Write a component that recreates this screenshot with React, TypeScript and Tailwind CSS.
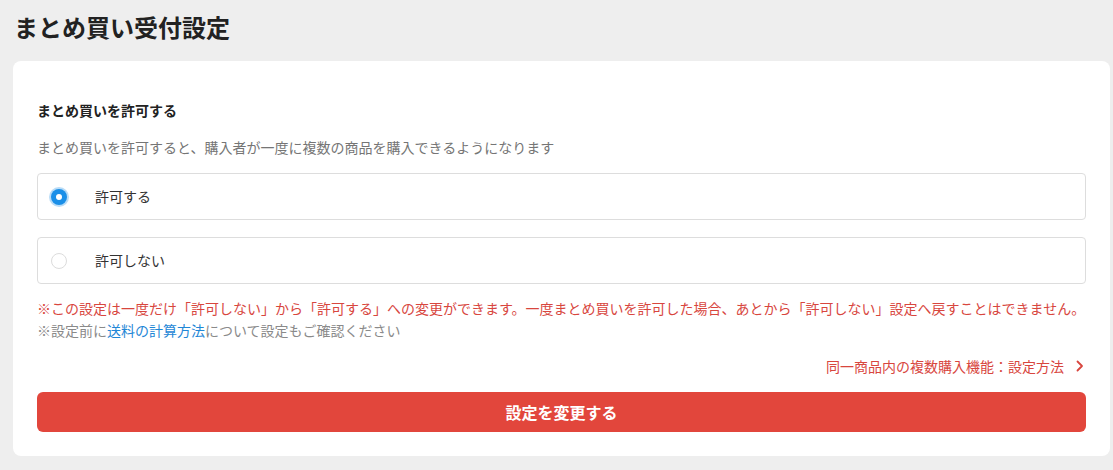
import React from "react";

export default function App() {
  return (
    <div
      className="w-[1113px] h-[470px] bg-[#eeeeee] overflow-hidden"
      style={{ fontFamily: '"Noto Sans CJK JP", "Noto Sans", sans-serif' }}
    >
      <div className="h-[61px] pl-[14px] pt-[9px]">
        <h1 className="text-[24px] leading-[36px] font-bold text-[#222222]">
          まとめ買い受付設定
        </h1>
      </div>
      <div className="ml-[13px] w-[1097px] bg-white rounded-[8px] px-[24px] pt-[39px] pb-[24px]">
        <div className="text-[14px] leading-[20px] font-bold text-[#222222]">
          まとめ買いを許可する
        </div>
        <p className="mt-[17px] text-[14px] leading-[20px] text-[#757575]">
          まとめ買いを許可すると、購入者が一度に複数の商品を購入できるようになります
        </p>
        <div className="mt-[16px] flex flex-col gap-[17px]">
          <label className="h-[47px] flex items-center border border-[#dddddd] rounded-[4px] pl-[11px]">
            <span className="w-[20px] h-[20px] rounded-full bg-[#b9dcf7] flex items-center justify-center">
              <span className="w-[16px] h-[16px] rounded-full bg-[#1a8fe8] flex items-center justify-center">
                <span className="w-[6px] h-[6px] rounded-full bg-white" />
              </span>
            </span>
            <span className="ml-[26px] text-[14px] text-[#333333]">許可する</span>
          </label>
          <label className="h-[47px] flex items-center border border-[#dddddd] rounded-[4px] pl-[11px]">
            <span className="w-[20px] h-[20px] flex items-center justify-center">
              <span className="w-[16px] h-[16px] rounded-full border border-[#dcdcdc] bg-white" />
            </span>
            <span className="ml-[26px] text-[14px] text-[#333333]">許可しない</span>
          </label>
        </div>
        <div className="mt-[13px] text-[14px] leading-[22px]">
          <p className="text-[#d8463e] whitespace-nowrap">
            ※この設定は一度だけ「許可しない」から「許可する」への変更ができます。一度まとめ買いを許可した場合、あとから「許可しない」設定へ戻すことはできません。
          </p>
          <p className="text-[#8a8a8a]">
            ※設定前に<span className="text-[#1f87d6]">送料の計算方法</span>について設定もご確認ください
          </p>
        </div>
        <div className="mt-[15px] flex justify-end items-center h-[20px] pr-[2px]">
          <span className="text-[14px] leading-[20px] text-[#d8463e]">
            同一商品内の複数購入機能：設定方法
          </span>
          <svg
            className="ml-[12px]"
            width="8"
            height="12"
            viewBox="0 0 8 12"
            fill="none"
          >
            <path
              d="M1.5 1.5 L6 6 L1.5 10.5"
              stroke="#d8463e"
              strokeWidth="1.8"
              strokeLinecap="round"
              strokeLinejoin="round"
            />
          </svg>
        </div>
        <button className="mt-[16px] w-full h-[40px] rounded-[6px] bg-[#e2463c] text-white text-[16px] font-bold">
          設定を変更する
        </button>
      </div>
    </div>
  );
}
